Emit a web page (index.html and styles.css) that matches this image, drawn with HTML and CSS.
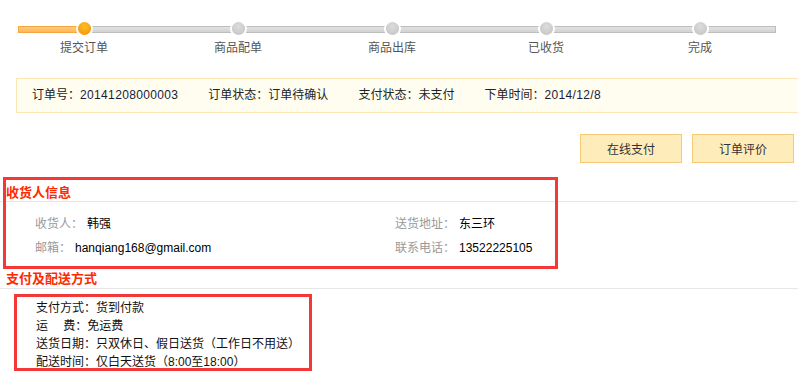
FILE: index.html
```html
<!DOCTYPE html>
<html lang="zh-CN">
<head>
    <meta charset="UTF-8">
    <title>订单详情</title>
    <link rel="stylesheet" href="styles.css">
</head>
<body>
    <div class="steps">
        <div class="step done">
            <span class="dot"></span>
            <span class="step-name">提交订单</span>
        </div>
        <div class="step">
            <span class="dot"></span>
            <span class="step-name">商品配单</span>
        </div>
        <div class="step">
            <span class="dot"></span>
            <span class="step-name">商品出库</span>
        </div>
        <div class="step">
            <span class="dot"></span>
            <span class="step-name">已收货</span>
        </div>
        <div class="step">
            <span class="dot"></span>
            <span class="step-name">完成</span>
        </div>
    </div>

    <div class="order-bar">
        <span>订单号：<span class="num">20141208000003</span></span>
        <span>订单状态：订单待确认</span>
        <span>支付状态：未支付</span>
        <span>下单时间：<span class="num">2014/12/8</span></span>
    </div>

    <div class="actions">
        <button type="button">在线支付</button>
        <button type="button">订单评价</button>
    </div>

    <div class="section consignee">
        <h3>收货人信息</h3>
        <div class="info-grid">
            <div><span class="label">收货人：</span><span class="value">韩强</span></div>
            <div><span class="label">送货地址：</span><span class="value">东三环</span></div>
            <div><span class="label">邮箱：</span><span class="value">hanqiang168@gmail.com</span></div>
            <div><span class="label">联系电话：</span><span class="value">13522225105</span></div>
        </div>
        <div class="mark mark-consignee"></div>
    </div>

    <div class="section delivery">
        <h3>支付及配送方式</h3>
        <ul class="pay-list">
            <li>支付方式：货到付款</li>
            <li>运　&nbsp;费：免运费</li>
            <li>送货日期：只双休日、假日送货（工作日不用送）</li>
            <li>配送时间：仅白天送货（8:00至18:00）</li>
        </ul>
        <div class="mark mark-delivery"></div>
    </div>
</body>
</html>
```

FILE: styles.css
```css
body {
    margin: 0;
    font-family: "Liberation Sans", "Noto Sans CJK SC", sans-serif;
    font-size: 12px;
    color: #333;
    background: #fff;
    overflow: hidden;
}

/* progress */
.steps {
    position: relative;
    display: flex;
    width: 770px;
    margin-left: 7px;
}
.steps::before {
    content: "";
    position: absolute;
    left: 11px;
    right: 1px;
    top: 26px;
    height: 5px;
    background: linear-gradient(#e2e2e2, #d2d2d2);
    border: 1px solid #bdbdbd;
}
.steps::after {
    content: "";
    position: absolute;
    left: 11px;
    top: 26px;
    width: 58px;
    height: 5px;
    background: linear-gradient(#ffcb7a, #ffb554);
    border: 1px solid #f7a542;
}
.step {
    flex: 0 0 154px;
    display: flex;
    flex-direction: column;
    align-items: center;
    position: relative;
    z-index: 1;
}
.dot {
    width: 13px;
    height: 13px;
    margin-top: 22px;
    border-radius: 50%;
    background: radial-gradient(circle at 50% 35%, #dcdcdc, #c2c2c2);
    box-shadow: 0 0 0 2px #fff;
}
.step.done .dot {
    background: radial-gradient(circle at 50% 35%, #ffc02a, #f78a00);
}
.step-name {
    margin-top: 5px;
    line-height: 16px;
    color: #555;
}

/* order summary */
.order-bar {
    display: flex;
    gap: 30px;
    margin: 22px 0 0 16px;
    padding-left: 15px;
    height: 33px;
    line-height: 33px;
    background: #fffdf0;
    border: 1px solid #fae5b3;
    border-right: none;
    color: #222;
}
.num {
    color: #1a1a3a;
    letter-spacing: 0.35px;
}

.actions {
    display: flex;
    justify-content: flex-end;
    gap: 10px;
    margin-top: 21px;
    padding-right: 4px;
}
.actions button {
    width: 102px;
    height: 29px;
    font-family: inherit;
    font-size: 12px;
    color: #333;
    background: #ffecbb;
    border: 1px solid #f6c979;
    cursor: pointer;
}

/* sections */
.section {
    position: relative;
}
.section h3 {
    margin: 0;
    padding-left: 6px;
    font-size: 13px;
    font-weight: bold;
    color: #ff2a00;
    border-bottom: 1px solid #e6e6e6;
}
.consignee {
    margin-top: 14px;
    padding-bottom: 10px;
}
.consignee h3 {
    padding-top: 8px;
    line-height: 16px;
}
.info-grid {
    display: grid;
    grid-template-columns: 360px 1fr;
    padding: 10px 0 0 35px;
    line-height: 24px;
}
.label {
    color: #999;
    margin-right: 4px;
}
.value {
    color: #000;
}

.delivery h3 {
    line-height: 18px;
}
.pay-list {
    list-style: none;
    margin: 0;
    padding: 10px 0 0 36px;
    line-height: 18px;
    color: #111;
}

/* highlight boxes */
.mark {
    position: absolute;
    box-sizing: border-box;
    border: 3px solid #f43737;
    pointer-events: none;
}
.mark-consignee {
    top: 0;
    left: 3px;
    width: 555px;
    height: 92px;
}
.mark-delivery {
    top: 24px;
    left: 14px;
    width: 298px;
    height: 77px;
}
```
